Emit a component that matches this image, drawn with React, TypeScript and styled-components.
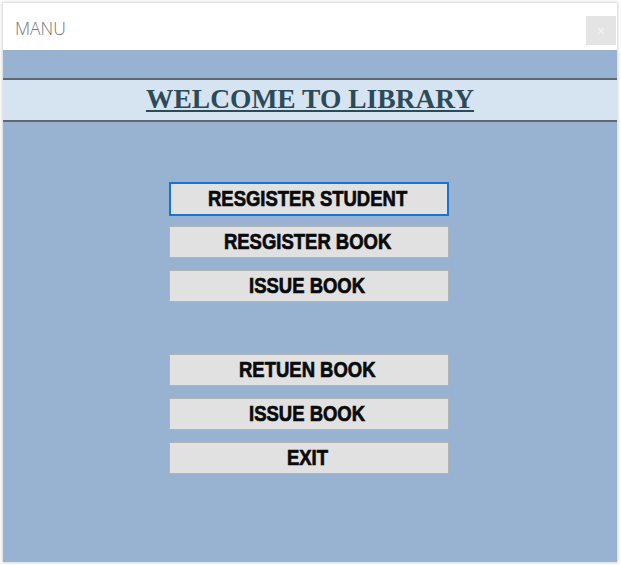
import React from "react";
import styled, { createGlobalStyle } from "styled-components";

const Global = createGlobalStyle`
  html, body { margin: 0; padding: 0; background: #ffffff; }
  #root { width: 621px; height: 565px; }
`;

const Window = styled.div`
  margin: 3px 0 0 3px;
  width: 614px;
  height: 559px;
  display: flex;
  flex-direction: column;
  box-shadow: 0 0 3px 1px rgba(0, 0, 0, 0.18);
  background: #98b3d1;
`;

const TitleBar = styled.div`
  height: 47px;
  background: #ffffff;
  display: flex;
  align-items: flex-start;
  justify-content: space-between;
`;

const Title = styled.div`
  font-family: "Open Sans", sans-serif;
  font-weight: 300;
  font-size: 17.5px;
  color: #747474;
  padding: 13px 0 0 12px;
  line-height: 24px;
`;

const Close = styled.div`
  margin-top: 13px;
  margin-right: 1px;
  width: 30px;
  height: 29px;
  background: #e4e4e4;
  color: #f4f4f4;
  font-family: "DejaVu Sans", sans-serif;
  font-size: 12px;
  display: flex;
  align-items: center;
  justify-content: center;
`;

const Body = styled.div`
  flex: 1;
  display: flex;
  flex-direction: column;
  padding-top: 28px;
`;

const Banner = styled.div`
  height: 40px;
  background: #d6e4f1;
  border-top: 2px solid #5d6872;
  border-bottom: 2px solid #5d6872;
  display: flex;
  align-items: center;
  justify-content: center;
`;

const Heading = styled.h1`
  margin: 0;
  font-family: "Liberation Serif", serif;
  font-weight: 700;
  font-size: 27.5px;
  line-height: 30px;
  color: #2d4a58;
  text-decoration: underline;
  text-decoration-thickness: 2px;
  text-underline-offset: 2px;
  margin-top: -3px;
`;

const Menu = styled.div`
  display: flex;
  flex-direction: column;
  padding: 60px 0 0 166px;
`;

const Group = styled.div`
  display: flex;
  flex-direction: column;
  gap: 12px;
  & + & { margin-top: 52px; }
`;

const Btn = styled.button<{ $focused?: boolean }>`
  width: 280px;
  box-sizing: border-box;
  margin: 0;
  padding: 0 3px 0 0;
  background: #e1e1e1;
  border: ${(p) => (p.$focused ? "2px solid #1a73cf" : "1px solid #b3b3b3")};
  height: ${(p) => (p.$focused ? "34px" : "32px")};
  margin-bottom: ${(p) => (p.$focused ? "-2px" : "0")};
  display: flex;
  align-items: center;
  justify-content: center;
  overflow: hidden;
`;

const Label = styled.span`
  display: inline-block;
  font-family: "Liberation Sans", sans-serif;
  font-weight: 700;
  font-size: 22px;
  line-height: 24px;
  color: #0a0a0a;
  -webkit-text-stroke: 0.7px #0a0a0a;
  white-space: nowrap;
  transform: scaleX(0.84);
`;

const items: { label: string; focused?: boolean }[][] = [
  [
    { label: "RESGISTER STUDENT", focused: true },
    { label: "RESGISTER BOOK" },
    { label: "ISSUE BOOK" },
  ],
  [{ label: "RETUEN BOOK" }, { label: "ISSUE BOOK" }, { label: "EXIT" }],
];

export default function App() {
  return (
    <>
      <Global />
      <Window>
        <TitleBar>
          <Title>MANU</Title>
          <Close>×</Close>
        </TitleBar>
        <Body>
          <Banner>
            <Heading>WELCOME TO LIBRARY</Heading>
          </Banner>
          <Menu>
            {items.map((group, gi) => (
              <Group key={gi}>
                {group.map((it, i) => (
                  <Btn key={i} $focused={it.focused}>
                    <Label>{it.label}</Label>
                  </Btn>
                ))}
              </Group>
            ))}
          </Menu>
        </Body>
      </Window>
    </>
  );
}
